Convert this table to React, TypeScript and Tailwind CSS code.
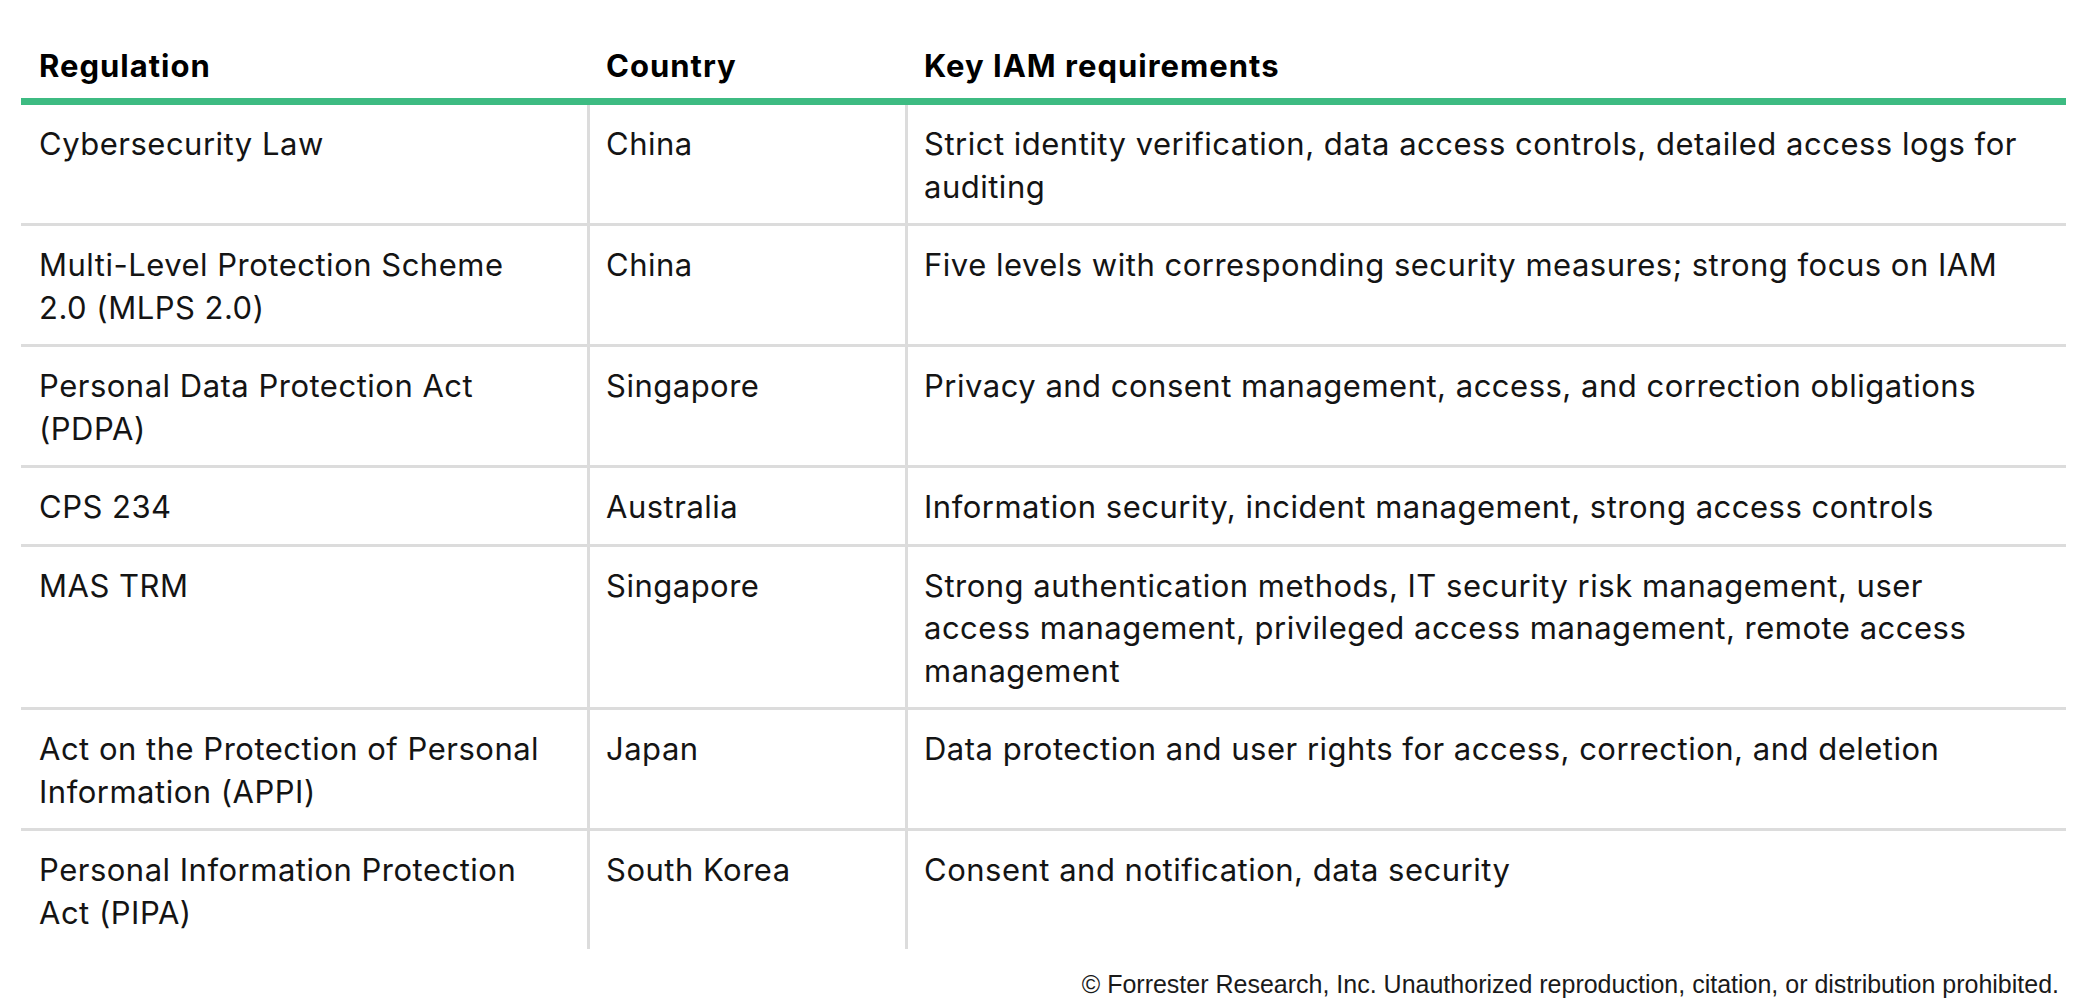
import React from "react";

interface Row {
  regulation: React.ReactNode;
  country: string;
  requirements: React.ReactNode;
}

const rows: Row[] = [
  {
    regulation: "Cybersecurity Law",
    country: "China",
    requirements: (
      <>
        Strict identity verification, data access controls, detailed access logs for
        <br />
        auditing
      </>
    ),
  },
  {
    regulation: (
      <>
        Multi-Level Protection Scheme
        <br />
        2.0 (MLPS 2.0)
      </>
    ),
    country: "China",
    requirements: "Five levels with corresponding security measures; strong focus on IAM",
  },
  {
    regulation: (
      <>
        Personal Data Protection Act
        <br />
        (PDPA)
      </>
    ),
    country: "Singapore",
    requirements: "Privacy and consent management, access, and correction obligations",
  },
  {
    regulation: "CPS 234",
    country: "Australia",
    requirements: "Information security, incident management, strong access controls",
  },
  {
    regulation: "MAS TRM",
    country: "Singapore",
    requirements: (
      <>
        Strong authentication methods, IT security risk management, user
        <br />
        access management, privileged access management, remote access
        <br />
        management
      </>
    ),
  },
  {
    regulation: (
      <>
        Act on the Protection of Personal
        <br />
        Information (APPI)
      </>
    ),
    country: "Japan",
    requirements: "Data protection and user rights for access, correction, and deletion",
  },
  {
    regulation: (
      <>
        Personal Information Protection
        <br />
        Act (PIPA)
      </>
    ),
    country: "South Korea",
    requirements: "Consent and notification, data security",
  },
];

export default function App() {
  return (
    <div className="w-[2088px] h-[1002px] bg-white overflow-hidden font-['Inter',sans-serif] text-[#141414]">
      <div className="pl-[21px] pr-[22px]">
        {/* header */}
        <div className="grid grid-cols-[566px_318px_1161px] pt-[44px] pb-[11px] border-b-[7px] border-[#3dbb82] text-[31px] leading-[43px] font-bold tracking-[1px] text-black">
          <div className="pl-[18px]">Regulation</div>
          <div className="pl-[19px]">Country</div>
          <div className="pl-[19px]">Key IAM requirements</div>
        </div>

        {/* body */}
        {rows.map((row, i) => (
          <div
            key={i}
            className={
              i === 0
                ? "grid grid-cols-[566px_318px_1161px] text-[31px] leading-[42.5px] tracking-[0.5px]"
                : "grid grid-cols-[566px_318px_1161px] text-[31px] leading-[42.5px] tracking-[0.5px] border-t-[3px] border-[#dcdcdc]"
            }
          >
            <div className="pl-[18px] pr-4 pt-[18px] pb-[15px]">{row.regulation}</div>
            <div className="pl-[16px] pr-4 pt-[18px] pb-[15px] border-l-[3px] border-[#dcdcdc]">{row.country}</div>
            <div className="pl-[16px] pr-4 pt-[18px] pb-[15px] border-l-[3px] border-[#dcdcdc]">{row.requirements}</div>
          </div>
        ))}
      </div>

      <div className="flex justify-end pr-[29px] pt-[21px] font-['Liberation_Sans',Arial,sans-serif] text-[25px] leading-[28px] text-[#1a1a1a]">
        © Forrester Research, Inc. Unauthorized reproduction, citation, or distribution prohibited.
      </div>
    </div>
  );
}
